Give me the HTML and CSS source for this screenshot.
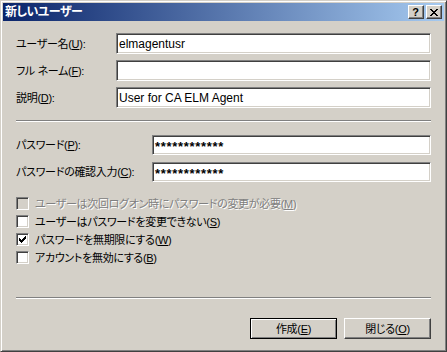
FILE: index.html
```html
<!DOCTYPE html>
<html lang="ja">
<head>
<meta charset="utf-8">
<title>新しいユーザー</title>
<link rel="stylesheet" href="styles.css">
</head>
<body>
<div class="window">
  <div class="titlebar">
    <span class="title">新しいユーザー</span>
    <div class="tbtns">
      <span class="tbtn help">?</span>
      <span class="tbtn close"><svg width="8" height="7" viewBox="0 0 8 7" shape-rendering="crispEdges"><path fill="#000" d="M0 0h2v1H0zM6 0h2v1H6zM1 1h2v1H1zM5 1h2v1H5zM2 2h4v1H2zM3 3h2v1H3zM2 4h4v1H2zM1 5h2v1H1zM5 5h2v1H5zM0 6h2v1H0zM6 6h2v1H6z"/></svg></span>
    </div>
  </div>
  <div class="content">
    <div class="fields">
      <div class="row"><span class="lbl">ユーザー名(<u>U</u>):</span><div class="edit">elmagentusr</div></div>
      <div class="row"><span class="lbl">フル ネーム(<u>F</u>):</span><div class="edit"></div></div>
      <div class="row"><span class="lbl">説明(<u>D</u>):</span><div class="edit">User for CA ELM Agent</div></div>
    </div>
    <div class="sep"></div>
    <div class="fields pw">
      <div class="row"><span class="lbl">パスワード(<u>P</u>):</span><div class="edit stars">************</div></div>
      <div class="row"><span class="lbl">パスワードの確認入力(<u>C</u>):</span><div class="edit stars">************</div></div>
    </div>
    <div class="checks">
      <div class="chk disabled"><span class="box"></span><span class="ctext">ユーザーは次回ログオン時にパスワードの変更が必要(<u>M</u>)</span></div>
      <div class="chk"><span class="box"></span><span class="ctext">ユーザーはパスワードを変更できない(<u>S</u>)</span></div>
      <div class="chk"><span class="box"><svg width="7" height="7" viewBox="0 0 7 7" shape-rendering="crispEdges"><path fill="#000" d="M6 0h1v1H6zM5 1h2v1H5zM0 2h1v1H0zM4 2h3v1H4zM0 3h2v1H0zM3 3h3v1H3zM0 4h5v1H0zM1 5h3v1H1zM2 6h1v1H2z"/></svg></span><span class="ctext">パスワードを無期限にする(<u>W</u>)</span></div>
      <div class="chk"><span class="box"></span><span class="ctext">アカウントを無効にする(<u>B</u>)</span></div>
    </div>
    <div class="sep sep2"></div>
    <div class="buttons">
      <span class="btn default">作成(<u>E</u>)</span>
      <span class="btn">閉じる(<u>O</u>)</span>
    </div>
  </div>
</div>
</body>
</html>
```

FILE: styles.css
```css
* { box-sizing: border-box; margin: 0; padding: 0; }

html, body {
  width: 447px;
  height: 352px;
  overflow: hidden;
}

body {
  background: #d4d0c8;
  font-family: "Liberation Sans", "Noto Sans CJK JP", sans-serif;
  font-size: 11px;
  letter-spacing: -0.3px;
  font-feature-settings: "palt";
  color: #000;
}

u { text-decoration: underline; text-underline-offset: 1px; }

.window {
  width: 447px;
  height: 352px;
  border: 1px solid;
  border-color: #d4d0c8 #404040 #404040 #d4d0c8;
  box-shadow: inset 1px 1px #ffffff, inset -1px -1px #808080;
  background: #d4d0c8;
  padding: 2px;
  display: flex;
  flex-direction: column;
}

.titlebar {
  height: 18px;
  background: linear-gradient(to right, #0a246a, #a6caf0);
  display: flex;
  align-items: center;
  justify-content: space-between;
  padding-left: 2px;
  padding-right: 2px;
}

.title {
  color: #fff;
  font-weight: bold;
  font-size: 12px;
  letter-spacing: -0.5px;
  line-height: 18px;
}

.tbtns { display: flex; gap: 2px; }

.tbtn {
  width: 16px;
  height: 14px;
  background: #d4d0c8;
  border: 1px solid;
  border-color: #ffffff #404040 #404040 #ffffff;
  box-shadow: inset -1px -1px #808080;
  display: flex;
  align-items: center;
  justify-content: center;
}

.help {
  font-family: "Liberation Sans", sans-serif;
  font-weight: bold;
  font-size: 11px;
  letter-spacing: 0;
  line-height: 12px;
  padding-right: 1px;
}

.close svg { display: block; margin-right: 1px; }

.content {
  flex: 1;
  padding: 12px 13px 0 13px;
  display: flex;
  flex-direction: column;
}

.fields { display: flex; flex-direction: column; gap: 6px; }

.row {
  display: flex;
  align-items: center;
  height: 21px;
}

.lbl { width: 100px; flex: none; white-space: nowrap; line-height: 14px; }

.pw { margin-top: 13px; gap: 7px; }
.pw .row { height: 20px; }
.pw .lbl { width: 136px; }

.edit {
  flex: 1;
  height: 100%;
  background: #fff;
  border: 1px solid;
  border-color: #808080 #ffffff #ffffff #808080;
  box-shadow: inset 1px 1px #404040, inset -1px -1px #d4d0c8;
  padding: 0 2px;
  display: flex;
  align-items: center;
  white-space: nowrap;
  overflow: hidden;
  font-size: 12px;
  letter-spacing: 0;
}

.edit.stars {
  font-size: 13px;
  font-weight: bold;
  letter-spacing: 0.7px;
  padding-top: 3px;
}

.sep {
  margin-top: 12px;
  height: 2px;
  border-top: 1px solid #808080;
  border-bottom: 1px solid #ffffff;
}

.sep2 { margin-top: 33px; }

.checks {
  margin-top: 15px;
  display: flex;
  flex-direction: column;
  gap: 5px;
}

.chk {
  display: flex;
  align-items: center;
  height: 13px;
}

.box {
  width: 13px;
  height: 13px;
  flex: none;
  background: #fff;
  border: 1px solid;
  border-color: #808080 #ffffff #ffffff #808080;
  box-shadow: inset 1px 1px #404040, inset -1px -1px #d4d0c8;
  display: flex;
  align-items: center;
  justify-content: center;
  margin-right: 6px;
}

.box svg { display: block; }

.ctext { line-height: 14px; white-space: nowrap; }

.disabled .box { background: #d4d0c8; }
.disabled .ctext { color: #808080; text-shadow: 1px 1px #ffffff; }

.buttons {
  margin-top: 19px;
  display: flex;
  justify-content: flex-end;
  gap: 7px;
}

.btn {
  width: 87px;
  height: 21px;
  background: #d4d0c8;
  border: 1px solid;
  border-color: #ffffff #404040 #404040 #ffffff;
  box-shadow: inset -1px -1px #808080;
  display: flex;
  align-items: center;
  justify-content: center;
  line-height: 14px;
}

.btn.default {
  border-color: #000;
  box-shadow: inset 1px 1px #ffffff, inset -1px -1px #808080;
}
```
